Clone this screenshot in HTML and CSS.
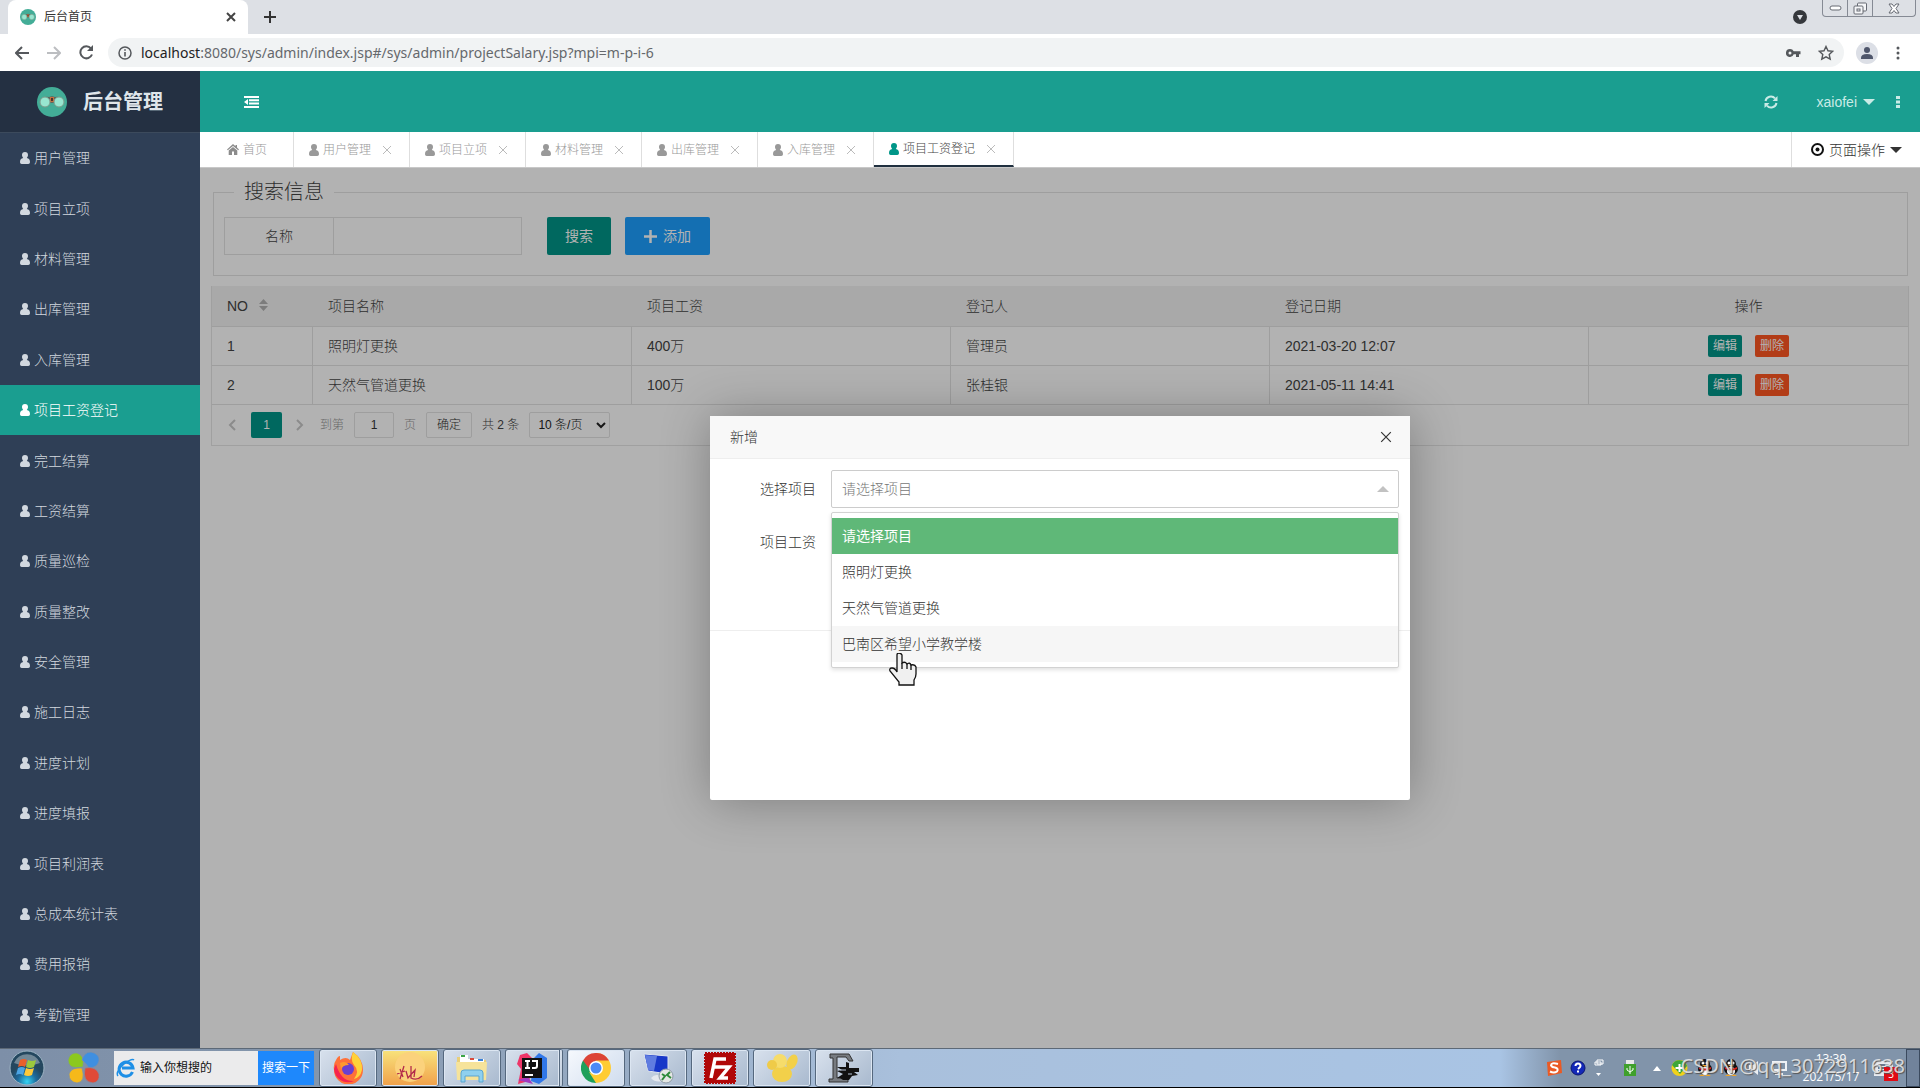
FILE: index.html
```html
<!DOCTYPE html>
<html lang="zh-CN">
<head>
<meta charset="utf-8">
<title>后台首页</title>
<link rel="stylesheet" href="styles.css">
</head>
<body>
<svg class="defs" aria-hidden="true">
  <symbol id="user" viewBox="0 0 10 12"><path d="M5 0a3 3 0 0 1 3 3.100c0 1.200-.5 2.200-1.200 2.800C9 6.300 10 7.600 10 10c0 1.300-.7 2-1.700 2H1.700C.7 12 0 11.300 0 10c0-2.400 1-3.700 3.200-4.100C2.500 5.300 2 4.300 2 3.100A3 3 0 0 1 5 0z"/></symbol>
  <symbol id="cross" viewBox="0 0 10 10"><path d="M1 1l8 8M9 1L1 9" fill="none" stroke="currentColor"/></symbol>
  <symbol id="brand" viewBox="0 0 30 30"><circle cx="15" cy="15" r="15" fill="#43ad97"/><path d="M6 11q3-2 6-1l3-1 3 1q3-1 6 1l-5 5h-8z" fill="#5b6a60"/><path d="M13 10h4v5h-4z" fill="#c5703e"/><path d="M14 11h2v3h-2z" fill="#4a3430"/><circle cx="8" cy="15" r="5" fill="#97e6d0" stroke="#7f9c8c"/><circle cx="22" cy="15" r="5" fill="#97e6d0" stroke="#7f9c8c"/></symbol>
  <symbol id="qq" viewBox="0 0 18 18"><ellipse cx="9" cy="10" rx="7" ry="6" fill="#111"/><circle cx="9" cy="5" r="5" fill="#111"/><ellipse cx="9" cy="12" rx="4" ry="4" fill="#fff"/><circle cx="7" cy="4" r="1.500" fill="#fff"/><circle cx="11" cy="4" r="1.500" fill="#fff"/><path d="M3 8q6 3 12 0v2q-6 3-12 0z" fill="#d8201a"/><path d="M6 6h6l-3 2z" fill="#f5a623"/><path d="M3 17q3-3 6 0 3-3 6 0z" fill="#f5a623"/></symbol>
</svg>

<header class="browser">
  <div class="tabstrip">
    <div class="browser-tab">
      <svg class="favicon"><use href="#brand"/></svg>
      <span class="browser-title">后台首页</span>
      <button class="plain" aria-label="关闭标签页"><svg class="x10 strong"><use href="#cross"/></svg></button>
    </div>
    <button class="plain new-tab" aria-label="新标签页"><svg width="12" height="12" viewBox="0 0 12 12"><path d="M6 0v12M0 6h12" stroke="#333" stroke-width="2"/></svg></button>
    <svg class="tab-search" width="14" height="14" viewBox="0 0 14 14"><circle cx="7" cy="7" r="7" fill="#35383c"/><path d="M4 5h6L7 10z" fill="#dde0e5"/></svg>
    <div class="window-buttons">
      <button aria-label="最小化"><svg width="13" height="6" viewBox="0 0 13 6"><rect x="1" y="1" width="11" height="4" rx="2" fill="#fff" stroke="#666a73"/></svg></button>
      <button aria-label="还原"><svg width="14" height="13" viewBox="0 0 14 13"><g fill="#f5f6f8" stroke="#666a73"><rect x="4.500" y="1" width="9" height="8" rx="1"/><rect x="1" y="4" width="9" height="8" rx="1"/><rect x="4" y="7" width="3" height="2"/></g></svg></button>
      <button class="wide" aria-label="关闭"><svg width="12" height="11" viewBox="0 0 12 11"><path d="M1 1h3l2 2.500L8 1h3L8 5.500 11 10H8L6 7.500 4 10H1l3-4.500z" fill="#fff" stroke="#666a73"/></svg></button>
    </div>
  </div>
  <div class="toolbar">
    <button class="plain" aria-label="后退"><svg width="14" height="14" viewBox="0 0 14 14"><path d="M14 7H1M7 1L1 7l6 6" fill="none" stroke="#55585c" stroke-width="2"/></svg></button>
    <button class="plain" aria-label="前进"><svg width="14" height="14" viewBox="0 0 14 14"><path d="M0 7h13M7 1l6 6-6 6" fill="none" stroke="#bcbec1" stroke-width="2"/></svg></button>
    <button class="plain" aria-label="刷新"><svg width="15" height="15" viewBox="0 0 15 15"><path d="M13 9.500A6 6 0 1 1 12 3.500" fill="none" stroke="#55585c" stroke-width="2"/><path d="M14 0v6H8z" fill="#55585c"/></svg></button>
    <div class="omnibox">
      <svg width="14" height="14" viewBox="0 0 14 14"><circle cx="7" cy="7" r="6" fill="none" stroke="#55585c" stroke-width="1.500"/><path d="M7 6v4.500M7 3.300v1.500" stroke="#55585c" stroke-width="1.600"/></svg>
      <span class="url"><b>localhost</b>:8080/sys/admin/index.jsp#/sys/admin/projectSalary.jsp?mpi=m-p-i-6</span>
      <svg width="15" height="10" viewBox="0 0 15 10"><path d="M4 1a4 4 0 1 0 3.700 5.300H10V9h3V6.300h1.500V3.300H7.700A4 4 0 0 0 4 1zm0 2.600a1.500 1.500 0 1 1 0 3 1.500 1.500 0 0 1 0-3z" fill="#55585c"/></svg>
      <svg width="16" height="16" viewBox="0 0 16 16"><path d="M8 1.500l2 4.300 4.700.5-3.500 3.200 1 4.700L8 11.800l-4.200 2.400 1-4.700L1.300 6.300 6 5.800z" fill="none" stroke="#55585c" stroke-width="1.400"/></svg>
    </div>
    <svg class="avatar" width="22" height="22" viewBox="0 0 22 22"><circle cx="11" cy="11" r="11" fill="#dcdfe6"/><circle cx="11" cy="8" r="3" fill="#4f566b"/><path d="M5 16q0-4 6-4t6 4v1H5z" fill="#4f566b"/></svg>
    <svg width="4" height="14" viewBox="0 0 4 14" fill="#55585c"><circle cx="2" cy="2" r="1.500"/><circle cx="2" cy="7" r="1.500"/><circle cx="2" cy="12" r="1.500"/></svg>
  </div>
</header>

<div class="app">
  <aside class="sidebar">
    <div class="logo"><svg width="30" height="30"><use href="#brand"/></svg><h1>后台管理</h1></div>
    <nav class="menu">
      <a href="#"><svg class="user"><use href="#user"/></svg>用户管理</a>
      <a href="#"><svg class="user"><use href="#user"/></svg>项目立项</a>
      <a href="#"><svg class="user"><use href="#user"/></svg>材料管理</a>
      <a href="#"><svg class="user"><use href="#user"/></svg>出库管理</a>
      <a href="#"><svg class="user"><use href="#user"/></svg>入库管理</a>
      <a href="#" class="current"><svg class="user"><use href="#user"/></svg>项目工资登记</a>
      <a href="#"><svg class="user"><use href="#user"/></svg>完工结算</a>
      <a href="#"><svg class="user"><use href="#user"/></svg>工资结算</a>
      <a href="#"><svg class="user"><use href="#user"/></svg>质量巡检</a>
      <a href="#"><svg class="user"><use href="#user"/></svg>质量整改</a>
      <a href="#"><svg class="user"><use href="#user"/></svg>安全管理</a>
      <a href="#"><svg class="user"><use href="#user"/></svg>施工日志</a>
      <a href="#"><svg class="user"><use href="#user"/></svg>进度计划</a>
      <a href="#"><svg class="user"><use href="#user"/></svg>进度填报</a>
      <a href="#"><svg class="user"><use href="#user"/></svg>项目利润表</a>
      <a href="#"><svg class="user"><use href="#user"/></svg>总成本统计表</a>
      <a href="#"><svg class="user"><use href="#user"/></svg>费用报销</a>
      <a href="#"><svg class="user"><use href="#user"/></svg>考勤管理</a>
    </nav>
  </aside>

  <div class="body">
    <div class="topbar">
      <button class="plain" aria-label="收起菜单"><svg width="15" height="12" viewBox="0 0 15 12" fill="#fff"><path d="M0 0h15v2H0zM5 3.300h10v2H5zM5 6.600h10v2H5zM0 10h15v2H0zM0 6l4-3v6z"/></svg></button>
      <span class="grow"></span>
      <button class="plain" aria-label="刷新"><svg width="14" height="14" viewBox="0 0 14 14"><path d="M1.500 6A5.500 5.500 0 0 1 11 3.300M12.500 8A5.500 5.500 0 0 1 3 10.700" fill="none" stroke="#c9ebe6" stroke-width="2"/><path d="M13.500 1v5h-5zM.5 13V8h5z" fill="#c9ebe6"/></svg></button>
      <a class="account" href="#">xaiofei <i class="caret"></i></a>
      <svg width="4" height="12" viewBox="0 0 4 12" fill="#c9ebe6"><path d="M0 0h4v3H0zM0 4.500h4v3H0zM0 9h4v3H0z"/></svg>
    </div>
    <div class="page-tabs">
      <a href="#" class="home"><svg width="12" height="11" viewBox="0 0 12 11"><path d="M6 0l2.500 2.200V1H10v2.600l2 1.800-.8.900L6 1.900.8 6.300 0 5.400zM6 3l4.300 3.600V11H7V7.500H5V11H1.700V6.600z"/></svg>首页</a>
      <a href="#"><svg class="user"><use href="#user"/></svg>用户管理<svg class="x10"><use href="#cross"/></svg></a>
      <a href="#"><svg class="user"><use href="#user"/></svg>项目立项<svg class="x10"><use href="#cross"/></svg></a>
      <a href="#"><svg class="user"><use href="#user"/></svg>材料管理<svg class="x10"><use href="#cross"/></svg></a>
      <a href="#"><svg class="user"><use href="#user"/></svg>出库管理<svg class="x10"><use href="#cross"/></svg></a>
      <a href="#"><svg class="user"><use href="#user"/></svg>入库管理<svg class="x10"><use href="#cross"/></svg></a>
      <a href="#" class="current"><svg class="user"><use href="#user"/></svg>项目工资登记<svg class="x10"><use href="#cross"/></svg></a>
      <button class="page-ops"><svg width="13" height="13" viewBox="0 0 13 13"><circle cx="6.500" cy="6.500" r="5.500" fill="none" stroke="#111" stroke-width="2"/><circle cx="6.500" cy="6.500" r="2" fill="#111"/></svg>页面操作<i class="caret"></i></button>
    </div>

    <main class="stage">
      <form class="search">
        <fieldset>
          <legend>搜索信息</legend>
          <div class="search-row">
            <div class="pane"><label for="name">名称</label><input id="name" type="text"></div>
            <button type="button" class="btn green">搜索</button>
            <button type="button" class="btn blue"><svg width="13" height="13" viewBox="0 0 13 13"><path d="M6.500 0v13M0 6.500h13" stroke="#fff" stroke-width="2.500"/></svg>添加</button>
          </div>
        </fieldset>
      </form>

      <section class="grid">
        <table>
          <colgroup><col class="c-no"><col><col><col><col><col></colgroup>
          <thead><tr><th>NO <svg class="sort" width="9" height="12" viewBox="0 0 9 12"><path d="M0 5l4.500-5L9 5zM0 7h9l-4.500 5z" fill="#b2b2b2"/></svg></th><th>项目名称</th><th>项目工资</th><th>登记人</th><th>登记日期</th><th class="center">操作</th></tr></thead>
          <tbody>
            <tr><td>1</td><td>照明灯更换</td><td>400万</td><td>管理员</td><td>2021-03-20 12:07</td><td class="center"><div class="ops"><button class="mini green">编辑</button><button class="mini red">删除</button></div></td></tr>
            <tr><td>2</td><td>天然气管道更换</td><td>100万</td><td>张桂银</td><td>2021-05-11 14:41</td><td class="center"><div class="ops"><button class="mini green">编辑</button><button class="mini red">删除</button></div></td></tr>
          </tbody>
        </table>
        <div class="pager">
          <button class="plain" aria-label="上一页"><svg width="8" height="12" viewBox="0 0 8 12"><path d="M7 1L2 6l5 5" fill="none" stroke="#c8c8c8" stroke-width="2"/></svg></button>
          <button class="page-no">1</button>
          <button class="plain" aria-label="下一页"><svg width="8" height="12" viewBox="0 0 8 12"><path d="M1 1l5 5-5 5" fill="none" stroke="#c8c8c8" stroke-width="2"/></svg></button>
          <label class="jump">到第 <input type="text" value="1"> 页</label>
          <button class="confirm">确定</button>
          <span class="total">共 2 条</span>
          <select aria-label="每页条数"><option>10 条/页</option></select>
        </div>
      </section>

      <div class="shade">
        <section class="dialog" role="dialog" aria-labelledby="dlg-title">
          <header class="dialog-head"><h2 id="dlg-title">新增</h2><button class="plain" aria-label="关闭"><svg class="x12"><use href="#cross"/></svg></button></header>
          <form class="dialog-form">
            <div class="field">
              <label for="project">选择项目</label>
              <div class="combo">
                <input id="project" type="text" placeholder="请选择项目" readonly>
                <i class="up"></i>
                <ul class="options" role="listbox">
                  <li class="chosen" role="option">请选择项目</li>
                  <li role="option">照明灯更换</li>
                  <li role="option">天然气管道更换</li>
                  <li class="hover" role="option">巴南区希望小学教学楼
                    <svg class="pointer" width="28" height="33" viewBox="0 0 28 33"><path d="M8 2q0-2 2-2t3 2v8q3-2 5 1 3-2 4 1 4-1 5 2v7q0 3-2 6v5H10v-3L1 18q-1-3 2-3 3 0 5 4z" fill="#f0f0f0" stroke="#111" stroke-width="1.300"/><path d="M13 10v6M18 11v5M22 12v5" stroke="#111" stroke-width="1.300"/></svg>
                  </li>
                </ul>
              </div>
            </div>
            <div class="field"><label for="salary">项目工资</label><input id="salary" class="covered" type="text"></div>
            <hr>
          </form>
        </section>
      </div>
    </main>
  </div>
</div>

<footer class="taskbar">
  <button class="plain start" aria-label="开始"><svg width="36" height="36" viewBox="0 0 36 36"><defs><radialGradient id="orb" cy=".9"><stop offset="0" stop-color="#35d4f4"/><stop offset=".55" stop-color="#1d6a9c"/><stop offset="1" stop-color="#24475f"/></radialGradient></defs><circle cx="18" cy="18" r="17" fill="url(#orb)" stroke="#9db4c4"/><path d="M5 13a14 14 0 0 1 26 0q-13 5-26 0z" fill="#fff" opacity=".35"/><path d="M11 10q4-2 7 0l-2 7q-3-2-7 0z" fill="#e8602c"/><path d="M19 10q4 2 8 0l-2 7q-4 2-8 0z" fill="#9cc83c"/><path d="M9 18q4-2 7 0l-2 7q-3-2-7 0z" fill="#4ba4e4"/><path d="M17 18q4 2 8 0l-2 7q-4 2-8 0z" fill="#fbc93a"/></svg></button>
  <svg class="clover" width="32" height="32" viewBox="0 0 32 32"><g stroke="#7d8fa8" stroke-width=".7"><path d="M15 15Q0 18 0 8 2 0 9 1q8 2 6 14z" fill="#8cc81e"/><path d="M14 8q2-8 9-8 9 2 8 9-2 7-10 7-4-6-7-8z" fill="#3f8fe0"/><path d="M1 22q2-7 13-6 4 14-5 15-8-1-8-9z" fill="#f6b91a"/><path d="M17 16q11-2 14 6 1 8-6 9-11-1-8-15z" fill="#e04a38"/></g></svg>
  <div class="desk-search">
    <svg width="20" height="20" viewBox="0 0 20 20"><path d="M16.500 14A7 7 0 1 1 17 10H6" fill="none" stroke="#1e8fe6" stroke-width="3"/><path d="M2 18Q-1 14 8 6q8-6 10-4" fill="none" stroke="#1e8fe6" stroke-width="1.500"/></svg>
    <input type="text" aria-label="搜索" value="输入你想搜的"><button>搜索一下</button>
  </div>
  <div class="apps">
    <button class="app-btn" aria-label="Firefox"><svg width="30" height="32" viewBox="0 0 30 32"><path d="M3 8q2-4 4-4v4q6-4 10 0l3-8q10 7 10 18a14 14 0 0 1-29 0Q0 12 3 8z" fill="#ff7139"/><path d="M20 0q10 7 9 18-2 8-8 9 6-8 0-14-4-5-1-13z" fill="#ffd23a"/><path d="M1 17a14 14 0 0 0 20 12Q8 30 3 12z" fill="#f5234f"/><circle cx="15" cy="17" r="6" fill="#6b3fd0"/><path d="M7 11q6-3 9 2-7 0-8 5z" fill="#ff9a2e"/></svg></button>
    <button class="app-btn sunset" aria-label="她"><svg width="32" height="32" viewBox="0 0 32 32"><circle cx="16" cy="15" r="15" fill="#fbd27c"/><path d="M6 17l3 8M10 14l-4 13M3 22l8-3M12 19l2 7 7-8-1 7M17 14v12q6 3 11-2" fill="none" stroke="#b32a4a" stroke-width="1.300"/></svg></button>
    <button class="app-btn" aria-label="资源管理器"><svg width="32" height="30" viewBox="0 0 32 30"><path d="M1 4h10l2 3h17v19H1z" fill="#e9cf78"/><path d="M4 2h8v4h16v5H4z" fill="#fff"/><path d="M5 2h4v2H5z" fill="#3da548"/><path d="M22 6h5v2h-5z" fill="#3b82d8"/><path d="M14 5h4v2h-4z" fill="#d94a3c"/><path d="M0 9h31l-1 18H1z" fill="#f6e39a"/><path d="M5 29V20q0-3 3-3h16q3 0 3 3v9h-4v-6H9v6z" fill="#8fd0ee" stroke="#5aa5d0"/></svg></button>
    <button class="app-btn stacked" aria-label="IntelliJ IDEA"><svg width="31" height="31" viewBox="0 0 31 31"><path d="M3 2l7-2 8 8-6 20-11 3 3-15-4-5z" fill="#ee3568"/><path d="M17 5l5-5 8 5v20l-8 6-8-3z" fill="#3177e8"/><path d="M1 27l10-3 5 7z" fill="#a03ac0"/><path d="M5 5h20v20H5z" fill="#111"/><path d="M8 8h5M8 15h5M10.500 8v7M15 8h5v5q0 2-2 2h-3M8 22h8" fill="none" stroke="#fff" stroke-width="2"/></svg></button>
    <button class="app-btn active" aria-label="Chrome"><svg width="30" height="30" viewBox="0 0 30 30"><path d="M15 15V0a15 15 0 0 1 0 30z" fill="#fc3"/><path d="M2 7.500L15 15l0 15A15 15 0 0 1 2 7.500z" fill="#1ea05a"/><path d="M8 19l7 3 6-3-6 11z" fill="#fc3"/><path d="M2 7.500a15 15 0 0 1 26 0H15l-7 8z" fill="#dc4437"/><circle cx="15" cy="15" r="7" fill="#fff"/><circle cx="15" cy="15" r="5.500" fill="#4a8af4"/></svg></button>
    <button class="app-btn" aria-label="远程桌面"><svg width="31" height="31" viewBox="0 0 31 31"><path d="M8 25q4-5 10-2l2 5q-8 2-12-3z" fill="#e5e8ee"/><path d="M1 1l24 2v18L5 18z" fill="#1737c8" stroke="#e0e6f0"/><path d="M2 2l12 1-3 15-6-1z" fill="#5f7ce0"/><circle cx="23" cy="23" r="7" fill="#e4e7e4" stroke="#8d9aa6"/><path d="M19 21l3 2-3 4M27 19l-3 3 4 3" fill="none" stroke="#2e8b3a" stroke-width="2"/></svg></button>
    <button class="app-btn" aria-label="FileZilla"><svg width="32" height="32" viewBox="0 0 32 32"><path d="M1 1h30v30H1z" fill="#b00808" stroke="#b00808" stroke-width="2" stroke-dasharray="2 1"/><path d="M7 26L11 7h11M10 15h9M16 15h9l-9 11h8" fill="none" stroke="#fff" stroke-width="3.500"/></svg></button>
    <button class="app-btn" aria-label="工具"><svg width="32" height="30" viewBox="0 0 32 30"><ellipse cx="16" cy="21" rx="10" ry="8" fill="#f2d04a"/><ellipse cx="14" cy="8" rx="7" ry="7" fill="#f6dc6a"/><ellipse cx="6" cy="12" rx="5" ry="5" fill="#efcb48"/><ellipse cx="26" cy="9" rx="5" ry="8" transform="rotate(25 26 9)" fill="#f2d04a"/></svg></button>
    <button class="app-btn" aria-label="录屏"><svg width="32" height="30" viewBox="0 0 32 30"><path d="M2 1h19l4 7h-4l-3-4H9v21h11v4H1v-3h4V5H2z" fill="#777b80" stroke="#333"/><path d="M9 14h9V9l3 1v5h10v4h-5l4 3-6 1-3 4h-6l-3-2H9l6-4-6-3 5-1z" fill="#111"/><path d="M12 17h6M20 21h4" stroke="#b5c2d4"/></svg></button>
  </div>
  <div class="tray">
    <svg width="16" height="16" viewBox="0 0 16 16"><path d="M1 2l14-2 1 13-14 3z" fill="#ea5a24"/><path d="M12 4Q5 2 5 5.500q1 2 4 2 4 1 2 4-3 2-7 0" fill="none" stroke="#fff" stroke-width="2"/></svg>
    <svg width="16" height="16" viewBox="0 0 16 16"><circle cx="8" cy="8" r="7" fill="#1328b8" stroke="#0b1670"/><path d="M5.500 6q0-2.500 2.500-2.500T10.500 6Q10.500 7 8 9M8 10.500v2" fill="none" stroke="#fff" stroke-width="2"/></svg>
    <svg width="10" height="18" viewBox="0 0 10 18"><path d="M3 1h6v4H3zM1 3h6v3H1z" fill="none" stroke="#fff"/><path d="M2 14h5l-2.500 3z" fill="#fff"/></svg>
    <svg class="usb" width="12" height="17" viewBox="0 0 12 17"><path d="M2 0h8v4H2z" fill="#e8e8e8"/><path d="M0 4h12v12H0z" fill="#3fa02c"/><path d="M6 14V6M3 8v2l3 2 3-2V8" fill="none" stroke="#fff"/></svg>
    <svg class="more" width="8" height="5" viewBox="0 0 8 5"><path d="M0 5l4-5 4 5z" fill="#fff"/></svg>
    <svg width="17" height="16" viewBox="0 0 17 16"><circle cx="8.500" cy="8" r="8" fill="#f2d21c"/><path d="M1 5a8 8 0 0 1 15 1l-7 8z" fill="#3da63a"/><path d="M8.500 4v8M4.500 8h8" stroke="#fff" stroke-width="2"/></svg>
    <svg width="18" height="18"><use href="#qq"/></svg>
    <svg width="18" height="18"><use href="#qq"/></svg>
    <svg width="16" height="16" viewBox="0 0 16 16"><path d="M1 5h4l5-4v14l-5-4H1z" fill="#eef1f5"/></svg>
    <svg width="16" height="16" viewBox="0 0 16 16"><path d="M1 2h13v8H1zM6 10v4M3 14h8" fill="none" stroke="#eef1f5" stroke-width="2"/></svg>
    <div class="clock"><span>13:39</span><span>2021/5/17</span></div>
    <div class="news"><svg width="20" height="18" viewBox="0 0 20 18"><path d="M0 2h19v15H0z" fill="#e8ebf0"/><path d="M4 6h11M4 9h11M4 12h7" stroke="#6c7788" stroke-width="2"/></svg><span class="badge">3</span></div>
    <button class="show-desktop" aria-label="显示桌面"></button>
    <span class="watermark">CSDN @qq_3072911638</span>
  </div>
</footer>
</body>
</html>
```
FILE: styles.css
```css
* { box-sizing: border-box; }
body {
  margin: 0;
  min-height: 100vh;
  display: flex;
  flex-direction: column;
  font: 300 14px/20px "Liberation Sans", "Noto Sans CJK SC", sans-serif;
  color: #444;
}
button, input, select { font: inherit; color: inherit; }
button { white-space: nowrap; padding: 0; border: 0; }
a { text-decoration: none; color: inherit; }
svg { flex: none; display: block; }
.defs { position: absolute; width: 0; height: 0; }
.plain { background: none; display: flex; align-items: center; justify-content: center; }
.user { width: 10px; height: 12px; fill: currentColor; }
.x10 { width: 10px; height: 10px; }
.x12 { width: 12px; height: 12px; }
.strong { stroke-width: 2; }
.grow { flex: 1; }
.caret { width: 0; border: 6px solid transparent; border-top-color: currentColor; border-bottom: 0; }

/* browser window */
.browser { background: #dde0e5; }
.tabstrip { display: flex; align-items: center; height: 34px; padding: 0 4px 0 8px; }
.browser-tab { display: flex; align-items: center; gap: 8px; width: 240px; height: 34px; padding: 0 12px; background: #fff; border-radius: 8px 8px 0 0; }
.favicon { width: 16px; height: 16px; }
.browser-title { flex: 1; font-size: 12px; font-weight: 400; color: #333; }
.new-tab { width: 28px; height: 28px; margin: 0 auto 0 8px; }
.tab-search { margin-right: 15px; }
.window-buttons { display: flex; align-self: flex-start; height: 17px; border: 1px solid #858a94; border-top: 0; border-radius: 0 0 4px 4px; }
.window-buttons button { display: flex; align-items: center; justify-content: center; width: 25px; background: none; border-right: 1px solid #858a94; }
.window-buttons .wide { width: 42px; border-right: 0; }
.toolbar { display: flex; align-items: center; gap: 18px; height: 37px; padding: 0 20px 0 15px; background: #fff; }
.omnibox { flex: 1; display: flex; align-items: center; gap: 17px; height: 29px; margin: 0 -6px 0 -4px; padding: 0 10px; border-radius: 15px; background: #f1f3f4; }
.url { flex: 1; margin-left: -8px; font: 400 14px/20px "Noto Sans", sans-serif; color: #65686c; }
.url b { font-weight: 400; color: #222; }

/* frame */
.app { flex: 1; display: flex; }
.sidebar { flex: none; width: 200px; display: flex; flex-direction: column; background: #2f3f56; }
.logo { display: flex; align-items: center; gap: 16px; height: 62px; padding-left: 37px; background: #243042; border-bottom: 1px solid #3c4a5c; }
.logo h1 { margin: 0; font-size: 20px; line-height: 28px; font-weight: 700; color: #dfe5ea; }
.menu { flex: 1; display: flex; flex-direction: column; padding-bottom: 8px; }
.menu a { flex: 1; display: flex; align-items: center; gap: 4px; padding-left: 20px; color: #d2d8df; }
.menu .current { background: #1a9e90; color: #fff; }
.body { flex: 1; min-width: 0; display: flex; flex-direction: column; }
.topbar { display: flex; align-items: center; height: 61px; padding: 0 20px 0 44px; background: #1a9e90; color: #c9ebe6; }
.account { display: flex; align-items: center; gap: 6px; margin: 0 21px 0 39px; }
.page-tabs { display: flex; height: 36px; background: #fff; font-size: 12px; color: #999; border-bottom: 1px solid #c8c8c8; }
.page-tabs a { display: flex; align-items: center; gap: 4px; padding: 0 17px 0 15px; border-right: 1px solid #dedede; }
.page-tabs a .x10 { margin-left: 7px; color: #bbb; }
.page-tabs .home { padding: 0 26px 0 27px; fill: #8c8c8c; }
.page-tabs .current { border-bottom: 2px solid #20303f; color: #444; }
.page-tabs .current .user { color: #009688; }
.page-ops { display: flex; align-items: center; gap: 5px; margin-left: auto; padding: 0 18px 0 19px; background: none; border-left: 1px solid #dedede; font-size: 14px; color: #333; }

/* page content */
.stage { flex: 1; position: relative; padding: 14px 11px 0 11px; background: #fff; }
fieldset { margin: 0 1px 0 2px; padding: 15px 10px 0; height: 94px; border: 1px solid #e2e2e2; }
legend { margin-left: 10px; padding: 0 10px; font-size: 20px; line-height: 20px; }
.search-row { display: flex; align-items: center; }
.pane { display: flex; width: 298px; height: 38px; margin-right: 25px; border: 1px solid #e2e2e2; }
.pane label { width: 109px; line-height: 36px; text-align: center; border-right: 1px solid #e2e2e2; }
.pane input { flex: 1; min-width: 0; border: 0; background: none; }
.btn { display: flex; align-items: center; gap: 6px; height: 38px; margin-right: 14px; padding: 0 18px; border-radius: 2px; color: #fff; font-weight: 400; }
.blue { background: #1e9fff; padding: 0 19px; }
.green { background: #009688; }
.red { background: #ff5722; }
.grid { margin-top: 10px; border: 1px solid #e6e6e6; border-top: 0; }
table { width: 100%; table-layout: fixed; border-collapse: separate; border-spacing: 0; }
.c-no { width: 101px; }
th, td { height: 39px; padding: 0 15px; text-align: left; font-weight: 300; border-bottom: 1px solid #e2e2e2; }
th { height: 41px; background: #f2f2f2; }
td:not(:last-child) { border-right: 1px solid #e2e2e2; }
.center { text-align: center; }
.sort { display: inline-block; margin-left: 7px; }
.ops { display: flex; justify-content: center; gap: 13px; }
.mini { height: 22px; padding: 0 5px; border-radius: 2px; font-size: 12px; line-height: 22px; font-weight: 400; color: #fff; }
.pager { display: flex; align-items: center; height: 40px; padding-left: 16px; font-size: 12px; }
.page-no { width: 31px; height: 26px; margin: 0 14px 0 15px; border-radius: 2px; background: #009688; color: #fff; }
.jump { display: flex; align-items: center; gap: 10px; margin-left: 16px; color: #999; }
.jump input { width: 40px; height: 26px; padding: 0; text-align: center; color: #333; background: #fff; border: 1px solid #e2e2e2; border-radius: 2px; }
.confirm { width: 46px; height: 26px; margin: 0 10px 0 10px; background: #fff; border: 1px solid #e2e2e2; border-radius: 2px; color: #333; }
.pager select { width: 81px; height: 26px; margin-left: 10px; padding-left: 4px; border: 1px solid #e2e2e2; border-radius: 2px; background: #fff; color: #222; }

/* dialog */
.shade { position: absolute; inset: 0; display: flex; align-items: center; justify-content: center; background: rgba(0, 0, 0, .3); }
.dialog { width: 700px; min-height: 384px; background: #fff; border-radius: 2px; box-shadow: 1px 1px 50px rgba(0, 0, 0, .3); }
.dialog-head { display: flex; align-items: center; justify-content: space-between; height: 43px; padding: 0 18px 0 20px; background: #f8f8f8; border-bottom: 1px solid #eee; color: #333; }
.dialog-head h2 { margin: 0; font-size: 14px; font-weight: 300; }
.dialog-form { padding-top: 11px; }
.field { display: flex; align-items: center; height: 38px; margin-bottom: 15px; padding-right: 11px; }
.field label { width: 121px; padding-right: 15px; text-align: right; color: #333; }
.field input { width: 100%; height: 38px; padding: 0 10px; border: 1px solid #ccc; border-radius: 2px; background: #fff; }
.field .covered { flex: 1; }
.field input::placeholder { color: #777; }
.combo { flex: 1; position: relative; }
.up { position: absolute; right: 10px; top: 16px; border: 6px solid transparent; border-bottom-color: #c2c2c2; border-top: 0; }
.options { position: absolute; z-index: 1; top: 42px; left: 0; right: 0; margin: 0; padding: 5px 0; list-style: none; background: #fff; border: 1px solid #d2d2d2; border-radius: 2px; box-shadow: 0 2px 4px rgba(0, 0, 0, .12); color: #333; }
.options li { position: relative; padding: 0 10px; line-height: 36px; }
.options .chosen { background: #5fb878; color: #fff; font-weight: 400; }
.options .hover { background: #f6f6f6; }
.pointer { position: absolute; left: 57px; top: 27px; }
.dialog-form hr { margin: 69px 0 0; border: 0; border-top: 1px solid #eee; }

/* taskbar */
.taskbar { display: flex; align-items: center; height: 40px; border-top: 1px solid #5d6977; border-bottom: 1px solid #000; background: linear-gradient(90deg, #7d8fa8, #8496ac 320px, #a9c0dc 900px, #a9c4e4 1500px, #8194aa 1560px); }
.start { margin: 0 23px 0 9px; }
.clover { margin-right: 14px; }
.desk-search { display: flex; align-items: center; width: 200px; height: 34px; margin-right: 5px; padding-left: 2px; background: #ebebec; font-weight: 400; font-size: 12px; color: #111; }
.desk-search input { flex: 1; min-width: 0; padding: 0 2px 0 4px; border: 0; background: none; }
.desk-search button { width: 56px; height: 34px; background: #1e88fc; color: #fff; }
.apps { display: flex; gap: 4px; }
.app-btn { display: flex; align-items: center; justify-content: center; width: 58px; height: 38px; border: 1px solid #55687e; border-radius: 3px; background: linear-gradient(135deg, #d8e1ed, #a8b9ce); box-shadow: inset 0 0 0 1px #dce6f2; }
.app-btn.active { background: linear-gradient(135deg, #f6f9fd, #cfdcee); }
.app-btn.sunset { background: linear-gradient(#f8e37c, #f0a04a); }
.app-btn.stacked { border-right: 4px double #55687e; }
.tray { position: relative; display: flex; align-items: center; gap: 8px; height: 38px; margin-left: auto; color: #fff; font: 400 12px/20px "Open Sans", sans-serif; }
.usb { margin-left: 12px; }
.more { margin: 0 2px 0 9px; }
.clock { display: flex; flex-direction: column; align-items: center; width: 70px; line-height: 18px; }
.news { position: relative; width: 24px; }
.badge { position: absolute; left: 10px; top: 8px; width: 14px; height: 14px; line-height: 14px; text-align: center; background: #e00b14; font-size: 10px; }
.show-desktop { width: 14px; height: 38px; background: #71839b; border: 1px solid #3b4a5e; }
.watermark { position: absolute; right: 15px; top: 3px; font: 400 20px/28px "Noto Sans", sans-serif; color: rgba(235, 235, 235, .85); text-shadow: 1px 1px 1px #555; white-space: nowrap; }
```
